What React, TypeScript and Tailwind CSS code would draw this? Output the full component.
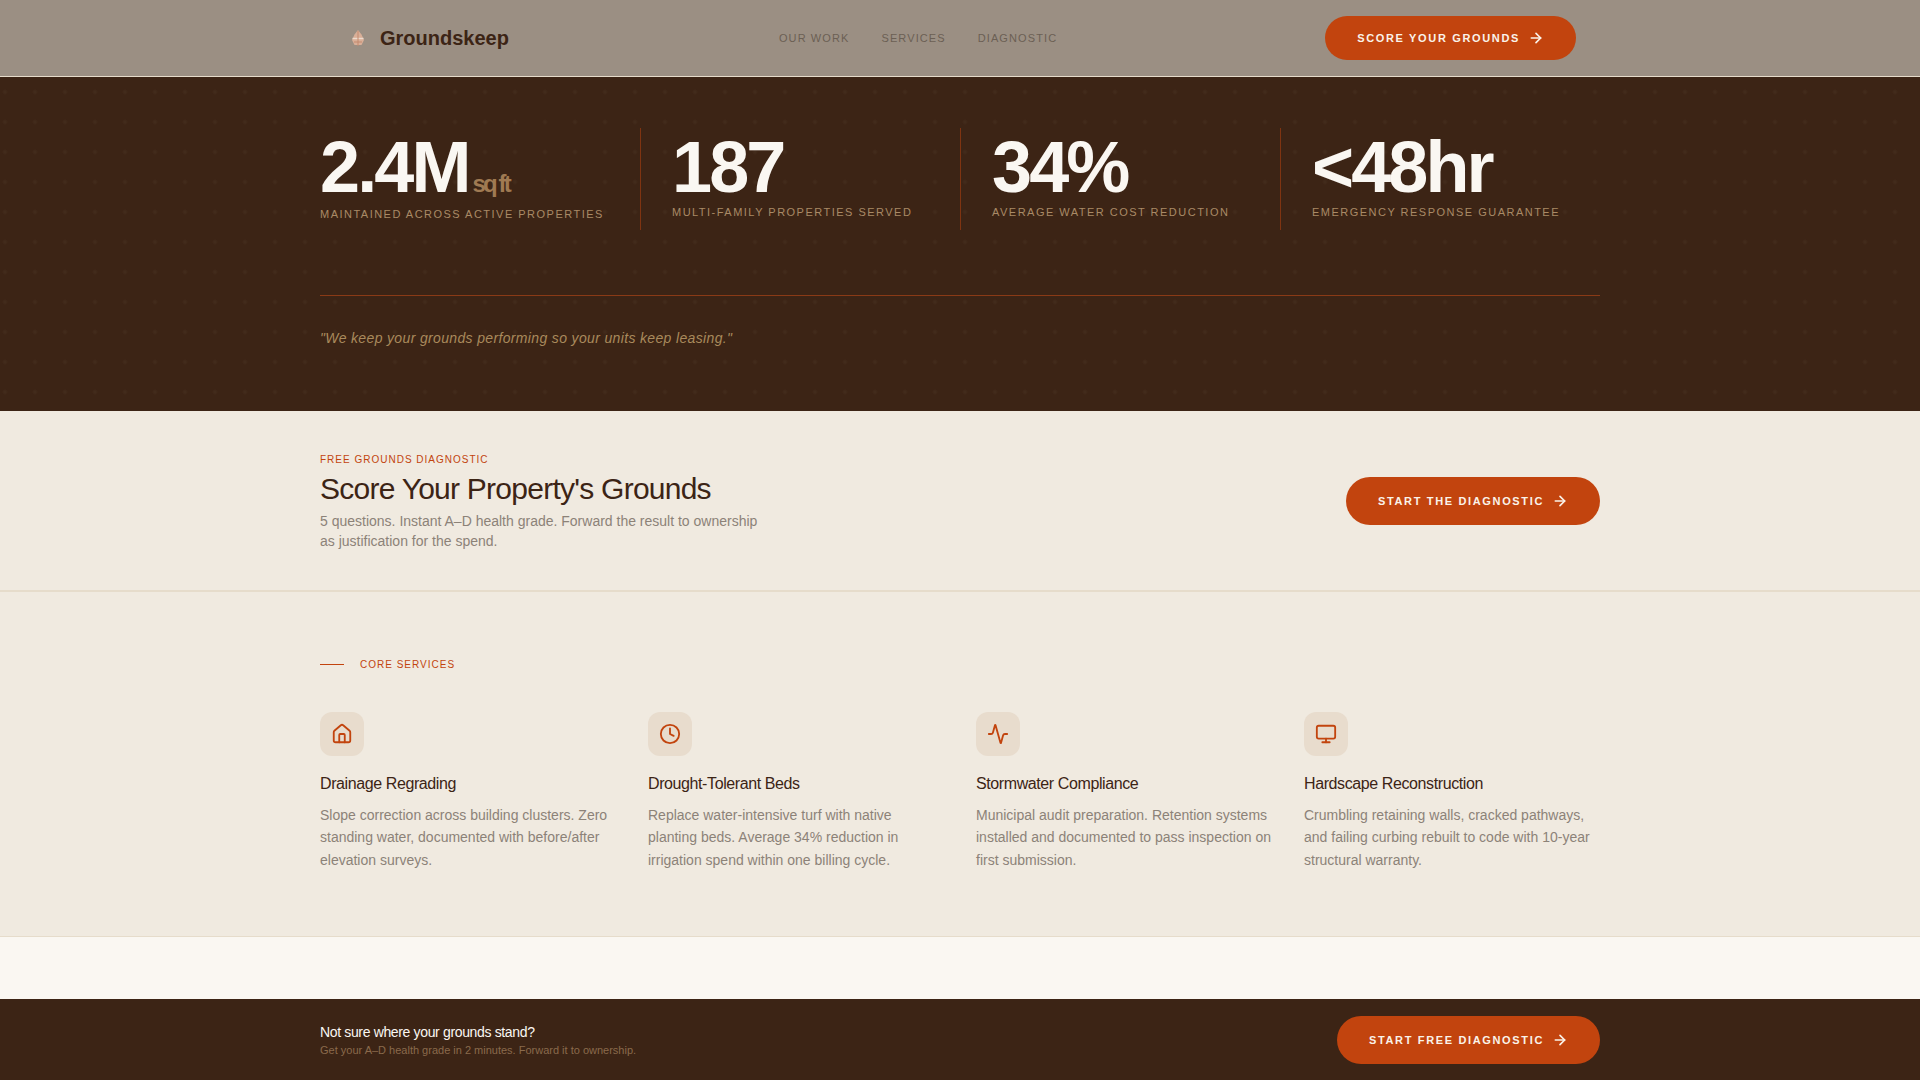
import { Activity, ArrowRight, Clock, House, Monitor } from "lucide-react";

const stats = [
  { value: "2.4M", unit: "sq ft", label: "Maintained across active properties" },
  { value: "187", label: "Multi-family properties served" },
  { value: "34%", label: "Average water cost reduction" },
  { value: "<48hr", label: "Emergency response guarantee" },
];

const services = [
  {
    icon: House,
    title: "Drainage Regrading",
    text: "Slope correction across building clusters. Zero standing water, documented with before/after elevation surveys.",
  },
  {
    icon: Clock,
    title: "Drought-Tolerant Beds",
    text: "Replace water-intensive turf with native planting beds. Average 34% reduction in irrigation spend within one billing cycle.",
  },
  {
    icon: Activity,
    title: "Stormwater Compliance",
    text: "Municipal audit preparation. Retention systems installed and documented to pass inspection on first submission.",
  },
  {
    icon: Monitor,
    title: "Hardscape Reconstruction",
    text: "Crumbling retaining walls, cracked pathways, and failing curbing rebuilt to code with 10-year structural warranty.",
  },
];

function CtaButton({ label, className }: { label: string; className: string }) {
  return (
    <button className={`flex items-center gap-2 rounded-full bg-[#c2440e] px-8 text-[11px] font-bold uppercase tracking-[0.15em] text-[#faf3ea] ${className}`}>
      {label}
      <ArrowRight className="h-4 w-4" strokeWidth={2.5} />
    </button>
  );
}

function LogoMark() {
  return (
    <svg viewBox="0 0 20 20" className="h-5 w-5 opacity-90">
      <path d="M10 2 L13.5 6.5 L16 12 L13.5 17 L6.5 17 L4 12 L6.5 6.5 Z" fill="#e0b39b" />
      <path d="M4.5 10.5 H15.5" stroke="#f6e3d6" strokeWidth="1.4" />
      <path d="M6 14 H14 M10 3 V18" stroke="#c98a6c" strokeWidth="1" />
    </svg>
  );
}

export default function App() {
  return (
    <div className="min-h-screen bg-[#f0eae0] font-['Liberation_Sans',Arial,sans-serif]">
      {/* Nav */}
      <header className="h-[77px] border-b border-[#e6dccb] bg-[#9b8f83]">
        <div className="mx-auto flex h-[76px] w-[1280px] items-center justify-between px-6">
          <div className="flex items-center gap-3 pl-1">
            <LogoMark />
            <span className="text-[20px] font-bold text-[#3c2415]">Groundskeep</span>
          </div>
          <nav className="ml-[2px] flex items-center gap-8 text-[11px] uppercase tracking-[0.1em] text-[#6b5f54]">
            <a>Our Work</a>
            <a>Services</a>
            <a>Diagnostic</a>
          </nav>
          <CtaButton label="Score your grounds" className="h-11" />
        </div>
      </header>

      {/* Stats */}
      <section className="h-[334px] bg-[#3c2415] bg-[radial-gradient(circle,#422b1b_1px,transparent_3px)] bg-[length:30px_30px] bg-[position:-10px_0] pt-[51px]">
        <div className="mx-auto w-[1280px]">
          <div className="grid grid-cols-4">
            {stats.map((s, i) => (
              <div key={s.label} className={`h-[102px] ${i === 0 ? "" : "border-l border-[#7f3411] pl-[31px]"}`}>
                <div className="flex h-[78px] items-baseline pt-[3px] text-[72px] leading-[1] font-bold tracking-[-0.04em] text-[#faf7f2]">
                  {s.value}
                  {s.unit && <span className="ml-1 text-[24px] text-[#a07a52]">{s.unit}</span>}
                </div>
                <p className={`text-[11px] uppercase tracking-[0.135em] text-[#a98a66] ${i === 0 ? "" : "mt-[-2px]"}`}>{s.label}</p>
              </div>
            ))}
          </div>
          <div className="mt-[65px] border-t border-[#8a3a16] pt-[32px]">
            <p className="text-[14px] leading-[21px] italic tracking-[0.025em] text-[#a98a5c]">
              "We keep your grounds performing so your units keep leasing."
            </p>
          </div>
        </div>
      </section>

      {/* Diagnostic */}
      <section className="h-[181px] border-b-2 border-[#e6dccb]">
        <div className="mx-auto flex h-[179px] w-[1280px] items-center justify-between">
          <div className="pt-[2px]">
            <p className="text-[10px] leading-[15px] uppercase tracking-[0.1em] text-[#c2440e]">Free grounds diagnostic</p>
            <h2 className="mt-1 text-[30px] leading-[36px] tracking-[-0.025em] text-[#3c2415]">Score Your Property's Grounds</h2>
            <p className="mt-1 max-w-md text-[14px] leading-[20px] text-[#8c8278]">
              5 questions. Instant A–D health grade. Forward the result to ownership as justification for the spend.
            </p>
          </div>
          <CtaButton label="Start the diagnostic" className="h-12 pt-px" />
        </div>
      </section>

      {/* Services */}
      <section className="h-[345px] border-b border-[#e6dccb] pt-[65px]">
        <div className="mx-auto w-[1280px]">
          <div className="flex items-center gap-4">
            <span className="h-px w-6 bg-[#c2440e]" />
            <span className="text-[10px] leading-[15px] uppercase tracking-[0.1em] text-[#c2440e]">Core services</span>
          </div>
          <div className="mt-[40px] grid grid-cols-4 gap-8">
            {services.map((s) => (
              <div key={s.title}>
                <div className="flex h-11 w-11 items-center justify-center rounded-xl bg-[#e8dccd]">
                  <s.icon className="h-[22px] w-[22px] text-[#c2440e]" strokeWidth={2} />
                </div>
                <h3 className="mt-4 text-[16px] leading-[24px] tracking-[-0.025em] text-[#3c2415]">{s.title}</h3>
                <p className="mt-2 text-[14px] leading-[22.4px] text-[#8c8278]">{s.text}</p>
              </div>
            ))}
          </div>
        </div>
      </section>

      <div className="h-[62px] bg-[#faf7f2]" />

      {/* Bottom CTA */}
      <footer className="h-[81px] bg-[#3c2415]">
        <div className="mx-auto flex h-full w-[1280px] items-center justify-between">
          <div>
            <p className="text-[14px] leading-[20px] tracking-[-0.025em] text-[#faf7f2]">Not sure where your grounds stand?</p>
            <p className="text-[11px] leading-[16px] text-[#8a6a4c]">Get your A–D health grade in 2 minutes. Forward it to ownership.</p>
          </div>
          <CtaButton label="Start free diagnostic" className="h-12 pt-px" />
        </div>
      </footer>
    </div>
  );
}
